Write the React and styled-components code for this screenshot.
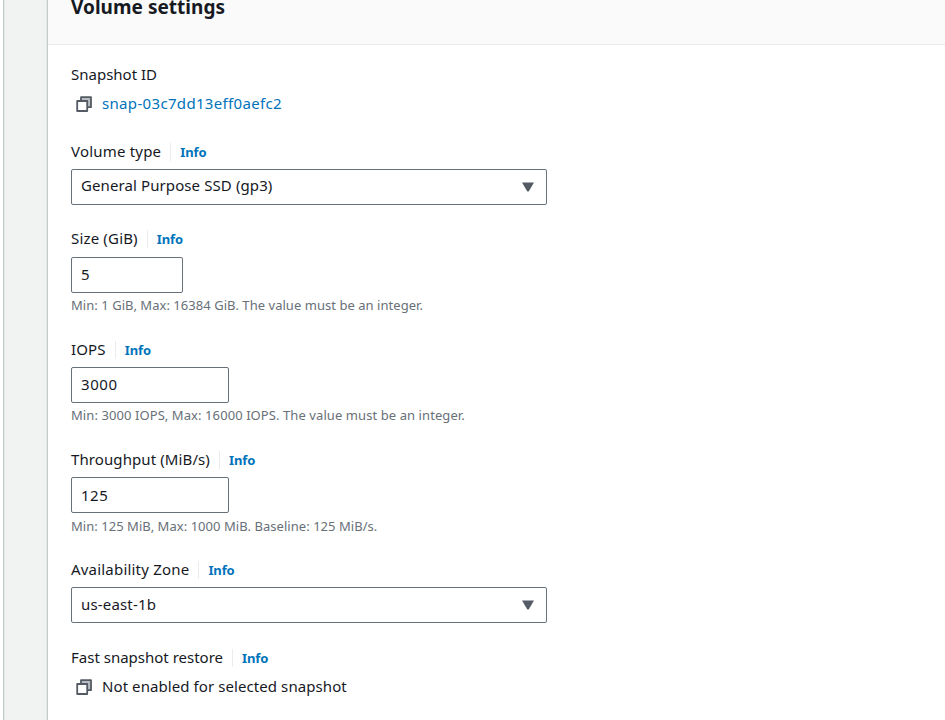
import React from "react";
import styled, { createGlobalStyle } from "styled-components";

const GlobalStyle = createGlobalStyle`
  * { box-sizing: border-box; }
  body {
    margin: 0;
    background: #fff;
    color: #16191f;
    font-family: "Noto Sans", "Open Sans", sans-serif;
    font-size: 15px;
    overflow: hidden;
  }
`;

const Page = styled.div`
  display: flex;
  width: 100%;
  height: 720px;
  overflow: hidden;
`;

const Gutter = styled.div`
  flex: none;
  width: 45px;
  margin-left: 3px;
  background: #f1f3f3;
  border-left: 1px solid #c4caca;
  border-right: 1px solid #c4caca;
  box-shadow: inset 1px 0 0 #e4e8e8, inset -1px 0 0 #e4e8e8;
`;

const Panel = styled.main`
  flex: 1;
  min-width: 0;
`;

const PanelHeader = styled.header`
  display: flex;
  align-items: flex-end;
  height: 45px;
  padding: 0 23px 23px;
  background: #fafafa;
  border-bottom: 1px solid #eaeded;
`;

const Title = styled.h2`
  margin: 0;
  font-size: 19px;
  line-height: 28px;
  font-weight: 700;
  letter-spacing: 0.03px;
  white-space: nowrap;
`;

const Form = styled.form`
  display: flex;
  flex-direction: column;
  padding: 17px 23px 0;
`;

const Field = styled.div`
  display: flex;
  flex-direction: column;
  align-items: flex-start;
  height: ${(p) => p.$height}px;
`;

const LabelRow = styled.div`
  display: flex;
  align-items: center;
  height: 24px;
  margin-bottom: ${(p) => p.$gap || 6}px;
`;

const Label = styled.label`
  line-height: 24px;
  white-space: nowrap;
  letter-spacing: ${(p) => p.$track || 0}px;
`;

const InfoLink = styled.a`
  margin-left: 9px;
  margin-top: 1px;
  padding-left: 9px;
  border-left: 1px solid #eaeded;
  color: #0073bb;
  font-size: 13px;
  line-height: 18px;
  font-weight: 700;
  letter-spacing: -0.1px;
  text-decoration: none;
`;

const Box = styled.div`
  display: flex;
  align-items: center;
  justify-content: space-between;
  width: ${(p) => p.$width}px;
  height: 36px;
  padding: 0 12px ${(p) => p.$lift ?? 2}px 9px;
  border: 1px solid #687078;
  border-radius: 2px;
  background: #fff;
  white-space: nowrap;
  letter-spacing: ${(p) => p.$track || 0}px;
`;

const Caret = styled.svg`
  display: block;
  width: 12px;
  height: 10px;
  margin-top: ${(p) => p.$drop}px;
  fill: #545b64;
`;

const Hint = styled.div`
  margin-top: ${(p) => p.$gap || 3}px;
  color: #687078;
  font-size: 13px;
  line-height: 18px;
  letter-spacing: ${(p) => p.$track || 0}px;
  white-space: nowrap;
`;

const ValueRow = styled.div`
  display: flex;
  align-items: center;
  height: 24px;
  margin-top: -1px;
  padding-left: 5px;
  gap: 10px;
  white-space: nowrap;
`;

const CopyGlyph = styled.svg`
  display: block;
  width: 16px;
  height: 16px;
  margin-top: ${(p) => p.$drop}px;
`;

const Value = styled.span`
  letter-spacing: ${(p) => p.$track || 0}px;
`;

const SnapshotLink = styled.a`
  color: #0073bb;
  text-decoration: none;
  letter-spacing: 0.33px;
`;

function CopyIcon({ drop = 2 }) {
  return (
    <CopyGlyph $drop={drop} viewBox="0 0 16 16" fill="none" stroke="#545b64" strokeWidth="1.8" strokeLinejoin="round">
      <path d="M5 1.2h10v10H5z" fill="#b9bdc1" />
      <path d="M1.2 5h10v10h-10z" fill="#fff" />
    </CopyGlyph>
  );
}

function FieldLabel({ track, gap, children }) {
  return (
    <LabelRow $gap={gap}>
      <Label $track={track}>{children}</Label>
      <InfoLink href="#">Info</InfoLink>
    </LabelRow>
  );
}

function Select({ track, lift = 2, children }) {
  return (
    <Box $width={476} $track={track} $lift={lift}>
      {children}
      <Caret $drop={lift} viewBox="0 0 12 10"><path d="M0 0.4h12L6.7 9.5h-1.4z" /></Caret>
    </Box>
  );
}

export default function App() {
  return (
    <>
      <GlobalStyle />
      <Page>
        <Gutter />
        <Panel>
          <PanelHeader><Title>Volume settings</Title></PanelHeader>
          <Form>
            <Field $height={77}>
              <LabelRow><Label>Snapshot ID</Label></LabelRow>
              <ValueRow><CopyIcon /><SnapshotLink href="#">snap-03c7dd13eff0aefc2</SnapshotLink></ValueRow>
            </Field>
            <Field $height={87}>
              <FieldLabel track={0.2}>Volume type</FieldLabel>
              <Select track={0.1} lift={4}>General Purpose SSD (gp3)</Select>
            </Field>
            <Field $height={111}>
              <FieldLabel track={0.17} gap={7}>Size (GiB)</FieldLabel>
              <Box $width={112}>5</Box>
              <Hint $track={0.04}>Min: 1 GiB, Max: 16384 GiB. The value must be an integer.</Hint>
            </Field>
            <Field $height={110}>
              <FieldLabel track={0.15}>IOPS</FieldLabel>
              <Box $width={158} $track={0.6}>3000</Box>
              <Hint $track={0.08}>Min: 3000 IOPS, Max: 16000 IOPS. The value must be an integer.</Hint>
            </Field>
            <Field $height={110}>
              <FieldLabel track={0.1}>Throughput (MiB/s)</FieldLabel>
              <Box $width={158} $track={0.5} $lift={0}>125</Box>
              <Hint $gap={4} $track={0.04}>Min: 125 MiB, Max: 1000 MiB. Baseline: 125 MiB/s.</Hint>
            </Field>
            <Field $height={88}>
              <FieldLabel track={0.2}>Availability Zone</FieldLabel>
              <Select track={0.17}>us-east-1b</Select>
            </Field>
            <Field $height={70}>
              <FieldLabel>Fast snapshot restore</FieldLabel>
              <ValueRow><CopyIcon /><Value $track={0.08}>Not enabled for selected snapshot</Value></ValueRow>
            </Field>
          </Form>
        </Panel>
      </Page>
    </>
  );
}
